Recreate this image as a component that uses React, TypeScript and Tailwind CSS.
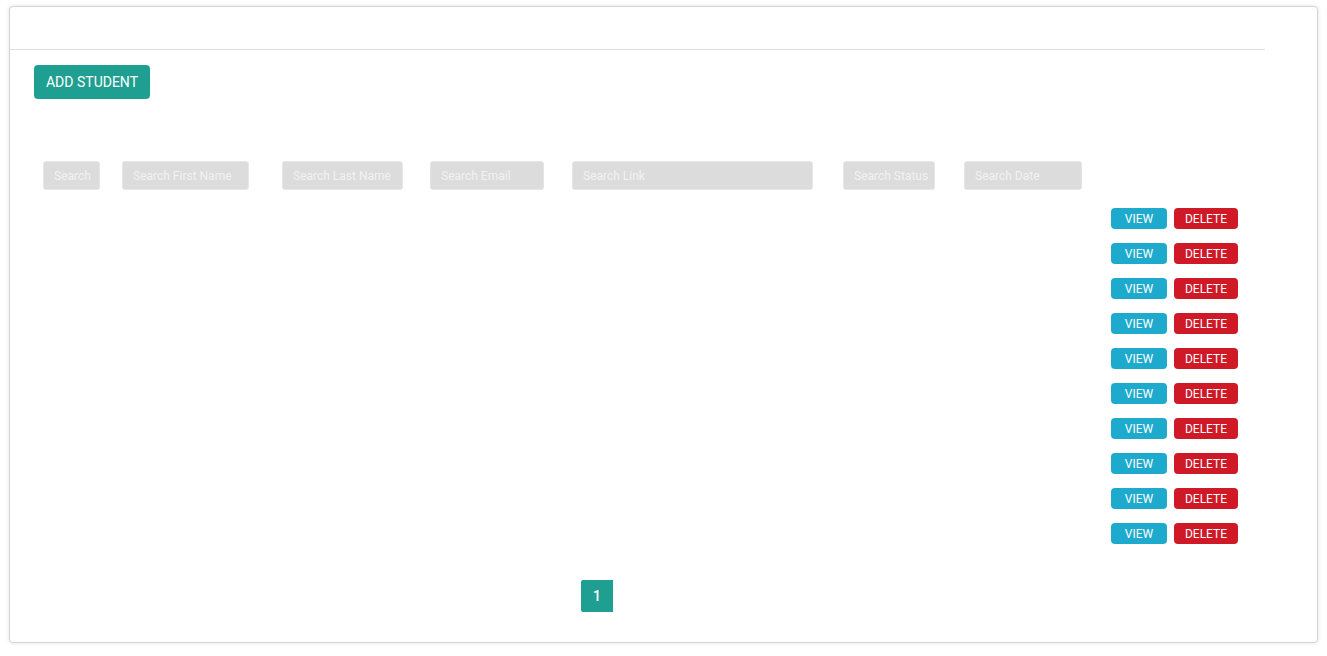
import React from 'react';

const filters = [
  { label: 'Search', width: 'w-[57px]', gap: 'ml-[33px]' },
  { label: 'Search First Name', width: 'w-[127px]', gap: 'ml-[22px]' },
  { label: 'Search Last Name', width: 'w-[121px]', gap: 'ml-[33px]' },
  { label: 'Search Email', width: 'w-[114px]', gap: 'ml-[27px]' },
  { label: 'Search Link', width: 'w-[241px]', gap: 'ml-[28px]' },
  { label: 'Search Status', width: 'w-[92px]', gap: 'ml-[30px]' },
  { label: 'Search Date', width: 'w-[118px]', gap: 'ml-[29px]' },
];

const rows = Array.from({ length: 10 }, (_, i) => i);

const App: React.FC = () => {
  return (
    <div className="min-h-screen bg-white pt-[6px] pl-[9px] font-['Roboto',sans-serif]">
      <div className="w-[1309px] rounded-[4px] border border-[#d4d4d4] bg-white shadow-[0_0_4px_rgba(0,0,0,0.12)]">
        <div className="mr-[52px] h-[43px] border-b border-[#dedede]" />

        <div className="pl-[24px] pt-[15px]">
          <button className="h-[34px] w-[116px] rounded-[4px] bg-[#1f9f91] pt-px text-[14px] text-white">
            ADD STUDENT
          </button>
        </div>

        <div className="mt-[62px] flex">
          {filters.map((f) => (
            <input
              key={f.label}
              placeholder={f.label}
              className={`${f.width} ${f.gap} h-[29px] rounded-[3px] border border-[#e6e6e6] bg-[#dcdcdc] pt-px pl-[10px] pr-[1px] text-[12px] text-[#555] outline-none placeholder:text-[#f2f2f2]`}
            />
          ))}
        </div>

        <div className="mt-[18px] flex flex-col gap-[14px] pr-[79px]">
          {rows.map((r) => (
            <div key={r} className="flex justify-end gap-[7px]">
              <button className="h-[21px] w-[56px] rounded-[4px] bg-[#1eaacd] text-[12px] text-white">
                VIEW
              </button>
              <button className="h-[21px] w-[64px] rounded-[4px] bg-[#cf1926] text-[12px] text-white">
                DELETE
              </button>
            </div>
          ))}
        </div>

        <div className="mt-[36px] mb-[30px] pl-[571px]">
          <button className="h-[32px] w-[32px] rounded-l-[2px] bg-[#1f9f91] text-[14px] font-medium text-white">
            1
          </button>
        </div>
      </div>
    </div>
  );
};

export default App;
